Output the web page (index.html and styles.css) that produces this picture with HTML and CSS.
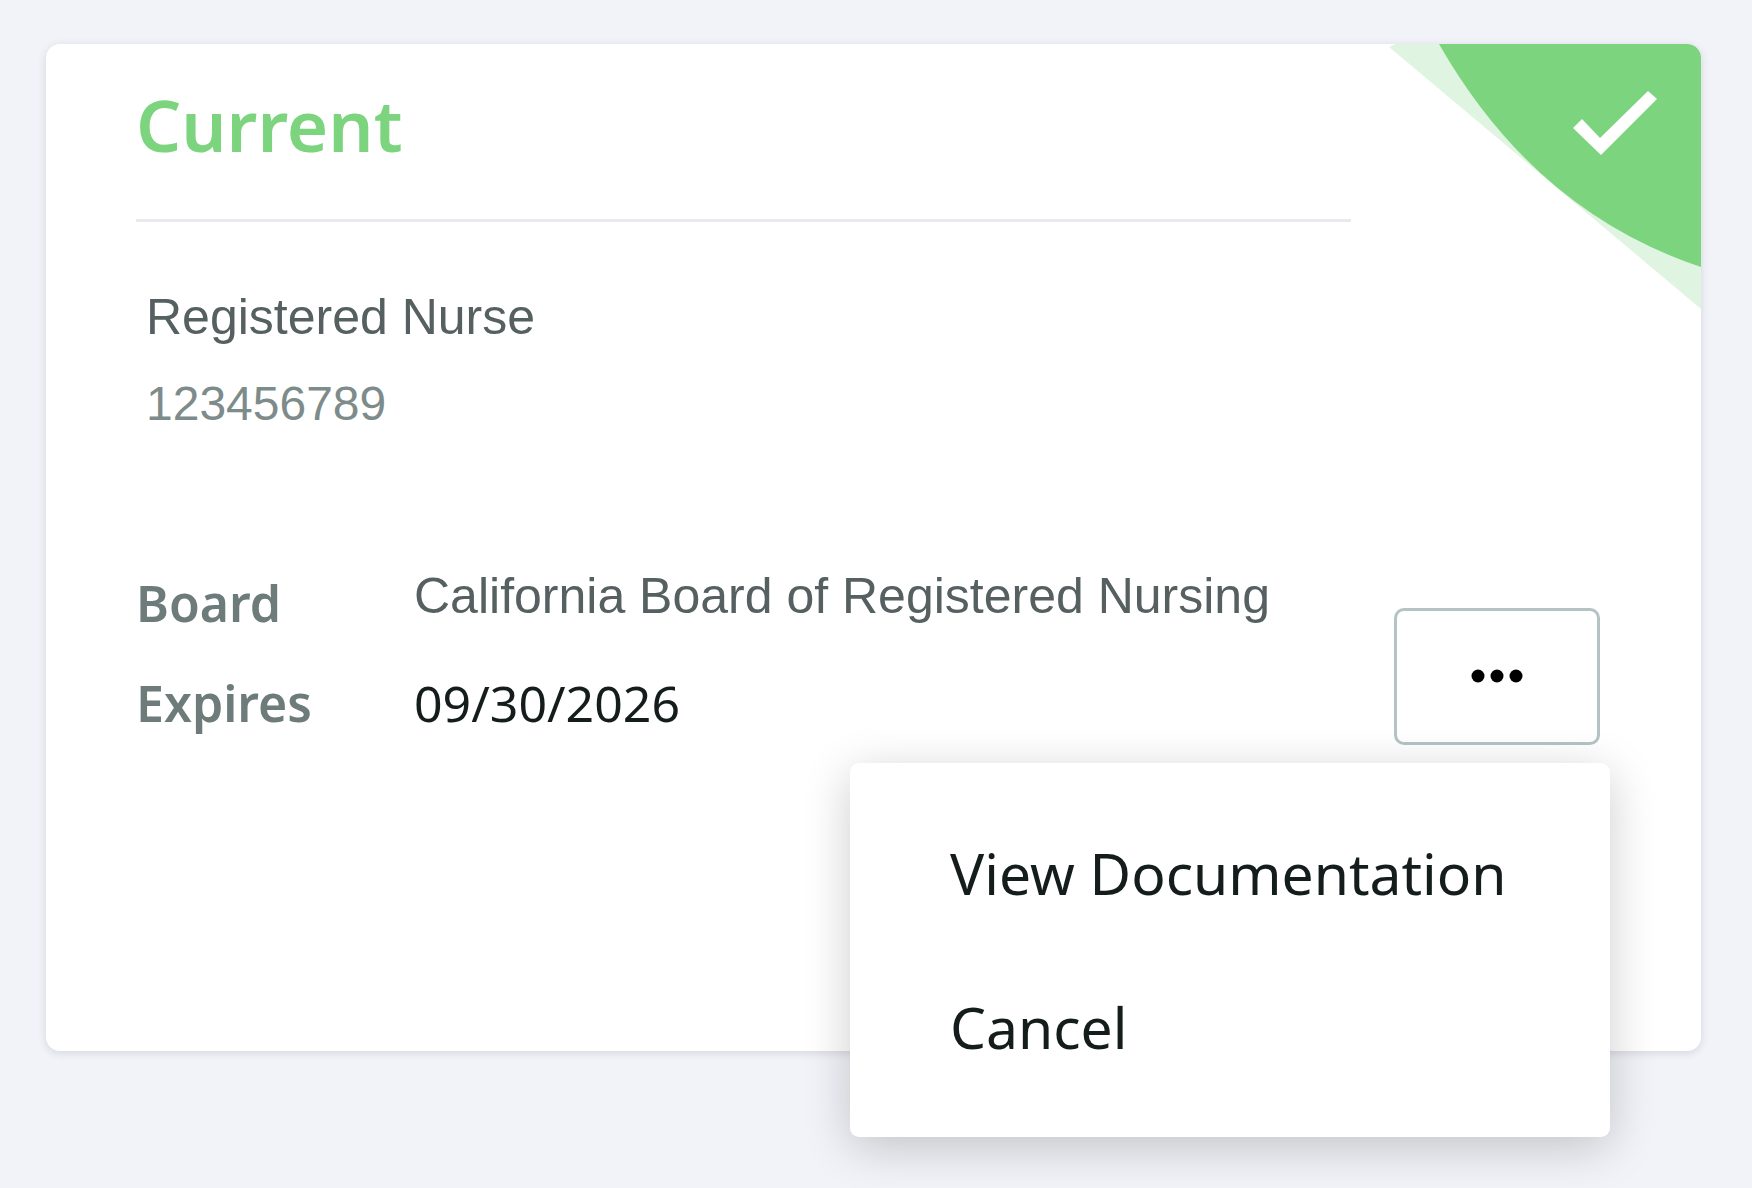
FILE: index.html
```html
<!DOCTYPE html>
<html lang="en">
<head>
  <meta charset="UTF-8">
  <meta name="viewport" content="width=device-width, initial-scale=1.0">
  <title>License</title>
  <link rel="stylesheet" href="styles.css">
</head>
<body>
  <main class="license-card">
    <!-- Status corner -->
    <svg class="corner" viewBox="0 0 312 265" aria-hidden="true">
      <path class="corner-light" d="M6 0H312V265L0 3Z"/>
      <path class="corner-dark" d="M50 0H312V223Q146 168 50 0Z"/>
      <path class="corner-check" d="M184 84L193 75L211 94L259 47L268 55L212 111Z"/>
    </svg>

    <header class="card-header">
      <h1>Current</h1>
    </header>

    <section class="license">
      <h2>Registered Nurse</h2>
      <p>123456789</p>
    </section>

    <div class="card-row">
      <dl class="details">
        <dt>Board</dt>
        <dd class="board">California Board of Registered Nursing</dd>
        <dt>Expires</dt>
        <dd>09/30/2026</dd>
      </dl>

      <div class="actions">
        <button type="button" class="more-btn" id="more-btn" aria-label="More options" aria-expanded="true">
          <svg viewBox="0 0 52 16" width="52" height="16" aria-hidden="true">
            <circle cx="7" cy="7" r="6.5"/>
            <circle cx="26" cy="7" r="6.5"/>
            <circle cx="45" cy="7" r="6.5"/>
          </svg>
        </button>
        <div class="menu" id="menu">
          <button type="button">View Documentation</button>
          <button type="button">Cancel</button>
        </div>
      </div>
    </div>
  </main>

  <script>
    const moreBtn = document.getElementById('more-btn');
    const menu = document.getElementById('menu');

    // Open and close the options menu
    moreBtn.addEventListener('click', function () {
      menu.hidden = !menu.hidden;
      moreBtn.setAttribute('aria-expanded', String(!menu.hidden));
    });
  </script>
</body>
</html>
```
FILE: styles.css
```css
* {
  box-sizing: border-box;
}

body {
  min-height: 100vh;
  margin: 0;
  padding: 44px 51px 44px 46px;
  background-color: #f2f3f8;
  font-family: "Noto Sans", "Open Sans", sans-serif;
  color: #141c1c;
}

h1, h2, p, dl, dd {
  margin: 0;
}

button {
  font: inherit;
  color: inherit;
  background: none;
  border: none;
  cursor: pointer;
}

.license-card {
  position: relative;
  padding: 41px 101px 306px 90px;
  background-color: #fff;
  border-radius: 14px;
  box-shadow: 0 2px 8px rgba(40, 45, 70, 0.14);
}

/* Status corner */
.corner {
  position: absolute;
  top: 0;
  right: 0;
  width: 312px;
  border-top-right-radius: 14px;
}

.corner-light {
  fill: #e0f5e1;
}

.corner-dark {
  fill: #7dd47e;
}

.corner-check {
  fill: #fff;
}

.card-header {
  margin-right: 249px;
  padding-bottom: 54px;
  border-bottom: 3px solid #e9e9ee;
}

.card-header h1 {
  font-size: 71px;
  font-weight: 600;
  line-height: 80px;
  color: #7dd47e;
}

.license {
  display: grid;
  gap: 27px;
  padding: 65px 10px 135px;
  font-family: "Liberation Sans", Arial, sans-serif;
  line-height: 60px;
}

.license h2 {
  font-size: 50px;
  font-weight: 400;
  color: #566060;
}

.license p {
  font-size: 48px;
  color: #7d8b8a;
}

/* Board, expiry date and the options button */
.card-row {
  display: flex;
  align-items: flex-start;
  justify-content: space-between;
}

.details {
  display: grid;
  grid-template-columns: 278px auto;
  row-gap: 32px;
  font-size: 50px;
  line-height: 68px;
}

.details dt {
  font-weight: 600;
  color: #6d7b7a;
}

.details .board {
  font-family: "Liberation Sans", Arial, sans-serif;
  line-height: 54px;
  color: #566060;
}

.actions {
  position: relative;
  margin-top: 39px;
}

.more-btn {
  display: flex;
  align-items: center;
  justify-content: center;
  width: 206px;
  height: 137px;
  border: 3px solid #b4c4c4;
  border-radius: 10px;
}

.menu {
  position: absolute;
  top: 155px;
  right: -10px;
  display: grid;
  gap: 78px;
  width: 760px;
  padding: 72px 100px;
  background-color: #fff;
  border-radius: 9px;
  box-shadow: 0 10px 48px rgba(0, 0, 0, 0.2);
}

.menu[hidden] {
  display: none;
}

.menu button {
  padding: 0;
  font-size: 57px;
  line-height: 76px;
  text-align: left;
  white-space: nowrap;
}
```
